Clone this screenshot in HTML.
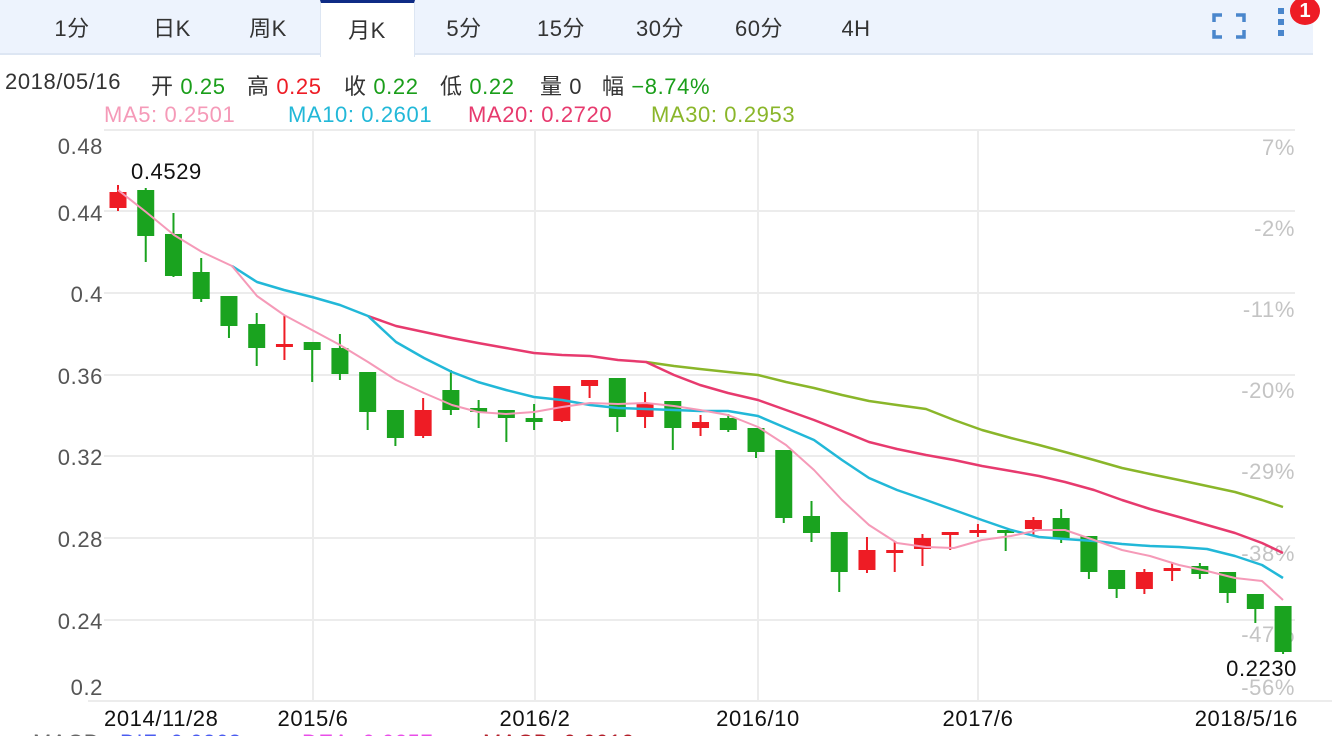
<!DOCTYPE html>
<html><head><meta charset="utf-8">
<style>
*{margin:0;padding:0;box-sizing:border-box}
body{width:1332px;height:736px;overflow:hidden;background:#fff;font-family:"Liberation Sans","Noto Sans CJK SC",sans-serif;position:relative}
.bar{position:absolute;left:0;top:0;width:1313px;height:55px;background:#edf3fd;border-bottom:2px solid #dde6f3}
.tab{position:absolute;top:1px;height:55px;line-height:55px;font-size:22px;letter-spacing:0.5px;color:#333;text-align:center;width:90px;margin-left:-45px}
.act{position:absolute;left:320px;top:0;width:95px;height:57px;background:#fff;border-top:3px solid #0e2b85;border-left:1px solid #dde6f3;border-right:1px solid #dde6f3}
.t{position:absolute;white-space:nowrap;font-size:22px;letter-spacing:0.6px}
.g{color:#1a9e1a}.r{color:#ee1c25}.k{color:#333}
</style></head><body>
<div class="bar"></div>
<div class="act"></div>
<div class="tab" style="left:72px">1分</div>
<div class="tab" style="left:172px">日K</div>
<div class="tab" style="left:268px">周K</div>
<div class="tab" style="left:367px;top:3px">月K</div>
<div class="tab" style="left:464px">5分</div>
<div class="tab" style="left:561px">15分</div>
<div class="tab" style="left:660px">30分</div>
<div class="tab" style="left:759px">60分</div>
<div class="tab" style="left:856px">4H</div>
<svg style="position:absolute;left:1210px;top:6px" width="40" height="36" viewBox="0 0 40 36">
<path d="M4 16V9h8M26 9h8v7M34 24v7h-8M12 31H4v-7" fill="none" stroke="#4a86cc" stroke-width="3.5"/>
</svg>
<div style="position:absolute;left:1278px;top:8px;width:6px;height:6px;background:#4a86cc"></div>
<div style="position:absolute;left:1278px;top:19px;width:6px;height:6px;background:#4a86cc"></div>
<div style="position:absolute;left:1278px;top:30px;width:6px;height:6px;background:#4a86cc"></div>
<div style="position:absolute;left:1290px;top:-3px;width:30px;height:28px;border-radius:50%;background:#ee1c25;color:#fff;font-weight:bold;font-size:20px;text-align:center;line-height:28px">1</div>

<div class="t k" style="left:5px;top:69px">2018/05/16</div>
<div class="t k" style="left:151px;top:69px">开 <span class="g">0.25</span></div>
<div class="t k" style="left:247px;top:69px">高 <span class="r">0.25</span></div>
<div class="t k" style="left:344px;top:69px">收 <span class="g">0.22</span></div>
<div class="t k" style="left:440px;top:69px">低 <span class="g">0.22</span></div>
<div class="t k" style="left:540px;top:69px">量 0</div>
<div class="t k" style="left:602px;top:69px">幅 <span class="g">−8.74%</span></div>
<div class="t" style="left:104px;top:102px;color:#f59ab8">MA5: 0.2501</div>
<div class="t" style="left:288px;top:102px;color:#22b8d8">MA10: 0.2601</div>
<div class="t" style="left:468px;top:102px;color:#e73a6e">MA20: 0.2720</div>
<div class="t" style="left:651px;top:102px;color:#8ab62a">MA30: 0.2953</div>

<svg id="c" style="position:absolute;left:0;top:0" width="1332" height="736" font-family="Liberation Sans, sans-serif" letter-spacing="0.6">
<g stroke="#ececec" stroke-width="2">
<line x1="104" y1="130" x2="1295" y2="130"/><line x1="104" y1="211" x2="1295" y2="211"/>
<line x1="104" y1="293" x2="1295" y2="293"/><line x1="104" y1="375" x2="1295" y2="375"/>
<line x1="104" y1="456" x2="1295" y2="456"/><line x1="104" y1="538" x2="1295" y2="538"/>
<line x1="104" y1="620" x2="1295" y2="620"/><line x1="88" y1="701" x2="1332" y2="701"/>
<line x1="313" y1="130" x2="313" y2="701"/><line x1="535" y1="130" x2="535" y2="701"/>
<line x1="758" y1="130" x2="758" y2="701"/><line x1="978" y1="130" x2="978" y2="701"/>
</g>
<g font-size="22" fill="#555" text-anchor="end">
<text x="103" y="154">0.48</text><text x="103" y="221">0.44</text><text x="103" y="302">0.4</text>
<text x="103" y="384">0.36</text><text x="103" y="465">0.32</text><text x="103" y="547">0.28</text>
<text x="103" y="629">0.24</text><text x="103" y="695">0.2</text>
</g>
<g font-size="22" fill="#c4c4c4" text-anchor="end">
<text x="1295" y="155">7%</text><text x="1295" y="236">-2%</text><text x="1295" y="317">-11%</text>
<text x="1295" y="398">-20%</text><text x="1295" y="479">-29%</text><text x="1295" y="561">-38%</text>
<text x="1295" y="642">-47%</text><text x="1295" y="695">-56%</text>
</g>
<g id="cd"></g>
<g fill="none" stroke-width="2.5" stroke-linejoin="round">
<polyline stroke="#8ab62a" points="646,362 674,366 700,369 728,372 758,375 786,382 814,388 842,395 869,401 897,405 926,409 954,420 982,430 1011,438 1039,445 1065,452 1094,460 1122,468 1150,474 1179,480 1207,486 1235,492 1262,500 1283,507"/>
<polyline stroke="#e73a6e" points="368,316 396,326 424,332 452,338 478,343 506,348 534,353 562,355 590,356 618,360 646,362 674,375 700,385 728,393 758,400 786,410 814,420 842,431 869,442 897,449 926,455 954,460 982,466 1011,471 1039,476 1065,482 1094,490 1122,500 1150,509 1179,517 1207,525 1235,533 1262,543 1283,553"/>
<polyline stroke="#22b8d8" points="232,266 257,282 284,290 312,297 340,305 368,316 396,342 424,358 452,372 478,382 506,390 534,397 562,400 590,405 618,408 646,409 674,410 700,411 728,411 758,416 786,428 814,440 842,460 869,478 897,490 926,500 954,510 982,520 1011,530 1039,537 1065,539 1094,541 1122,544 1150,546 1179,547 1207,549 1235,556 1262,565 1283,578"/>
<polyline stroke="#f59ab8" stroke-width="2" points="118,190 146,212 174,235 202,252 232,266 257,296 284,315 312,330 340,345 368,362 396,380 424,393 452,405 478,412 506,414 534,412 562,407 590,403 618,404 646,403 674,406 700,410 728,415 758,427 786,445 814,470 842,500 869,525 897,543 926,547 954,548 982,540 1011,536 1039,530 1065,530 1094,540 1122,550 1150,556 1179,565 1207,571 1235,578 1262,581 1283,600"/>
</g>
<text x="131" y="179" font-size="22" fill="#111">0.4529</text>
<text x="1297" y="676" font-size="22" fill="#111" text-anchor="end">0.2230</text>
<g font-size="22" fill="#111">
<text x="104" y="726">2014/11/28</text>
<text x="313" y="726" text-anchor="middle">2015/6</text>
<text x="535" y="726" text-anchor="middle">2016/2</text>
<text x="758" y="726" text-anchor="middle">2016/10</text>
<text x="978" y="726" text-anchor="middle">2017/6</text>
<text x="1298" y="726" text-anchor="end">2018/5/16</text>
</g>
<g font-size="22">
<text x="33" y="750" fill="#666">MACD</text>
<text x="120" y="750" fill="#4b5cf0">DIF: 0.0263</text>
<text x="302" y="750" fill="#e84ee8">DEA: 0.0257</text>
<text x="483" y="750" fill="#b31f2a">MACD: 0.0012</text>
</g>
</svg>
<script>
var d=[[192,208,185,211,'r'],[190,236,188,262,'g'],[234,276,213,277,'g'],[272,299,258,302,'g'],[296,326,296,338,'g'],[324,348,313,366,'g'],[344,347,316,360,'r'],[342,350,342,382,'g'],[348,374,334,380,'g'],[372,412,372,430,'g'],[410,438,410,446,'g'],[410,436,398,438,'r'],[390,410,370,415,'g'],[408,412,400,428,'g'],[410,418,410,442,'g'],[418,422,404,430,'g'],[386,421,386,422,'r'],[380,386,380,398,'r'],[378,417,378,432,'g'],[404,417,392,428,'r'],[401,428,401,450,'g'],[422,428,415,436,'r'],[418,430,414,432,'g'],[428,452,428,458,'g'],[450,518,450,523,'g'],[516,533,501,542,'g'],[532,572,532,592,'g'],[550,570,537,573,'r'],[550,552,542,572,'r'],[538,549,534,566,'r'],[532,535,532,550,'r'],[530,532,524,537,'r'],[530,532,530,551,'g'],[520,529,517,535,'r'],[518,538,509,543,'g'],[536,572,536,579,'g'],[570,589,570,598,'g'],[572,589,569,594,'r'],[568,571,562,581,'r'],[566,574,563,579,'g'],[572,593,572,603,'g'],[594,609,594,623,'g'],[606,652,606,654,'g']];
var s='';d.forEach(function(c,i){var x=118+i*27.74,col=c[4]=='r'?'#ee1c25':'#1aa31f';
s+='<line x1="'+x+'" x2="'+x+'" y1="'+c[2]+'" y2="'+c[3]+'" stroke="'+col+'" stroke-width="2"/>';
s+='<rect x="'+(x-8.5)+'" y="'+c[0]+'" width="17" height="'+Math.max(3,c[1]-c[0])+'" fill="'+col+'"/>';});
document.getElementById('cd').innerHTML=s;
</script>
</body></html>
